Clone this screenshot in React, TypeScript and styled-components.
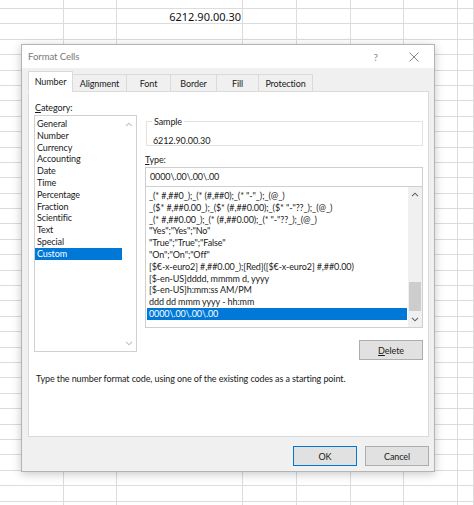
import styled, { createGlobalStyle } from "styled-components";

const GlobalStyle = createGlobalStyle`
  html, body {
    margin: 0;
    padding: 0;
    background: #ffffff;
  }
  body {
    font-family: Lato, "Noto Sans", sans-serif;
    color: #1a1a1a;
  }
`;

const colWidths = [64, 53, 126, 54, 54, 53, 54];
const ROWS = 34;

const categories = [
  "General",
  "Number",
  "Currency",
  "Accounting",
  "Date",
  "Time",
  "Percentage",
  "Fraction",
  "Scientific",
  "Text",
  "Special",
  "Custom",
];

const formats = [
  '_(* #,##0_);_(* (#,##0);_(* "-"_);_(@_)',
  '_($* #,##0.00_);_($* (#,##0.00);_($* "-"??_);_(@_)',
  '_(* #,##0.00_);_(* (#,##0.00);_(* "-"??_);_(@_)',
  '"Yes";"Yes";"No"',
  '"True";"True";"False"',
  '"On";"On";"Off"',
  "[$€-x-euro2] #,##0.00_);[Red]([$€-x-euro2] #,##0.00)",
  "[$-en-US]dddd, mmmm d, yyyy",
  "[$-en-US]h:mm:ss AM/PM",
  "ddd dd mmm yyyy - hh:mm",
  "0000\\.00\\.00\\.00",
];

const tabs = [
  { label: "Number", width: 45 },
  { label: "Alignment", width: 55 },
  { label: "Font", width: 45 },
  { label: "Border", width: 47 },
  { label: "Fill", width: 43 },
  { label: "Protection", width: 55 },
];

const Chevron = ({ up, color }: { up?: boolean; color: string }) => (
  <svg width="8" height="5" viewBox="0 0 8 5">
    <polyline
      points={up ? "1,4.2 4,1.2 7,4.2" : "1,0.8 4,3.8 7,0.8"}
      fill="none"
      stroke={color}
      strokeWidth="1.1"
    />
  </svg>
);

export default function App() {
  return (
    <Screen>
      <GlobalStyle />
      <Sheet>
        {Array.from({ length: ROWS }).map((_, r) =>
          [...colWidths, 0].map((_, c) => (
            <Cell key={`${r}-${c}`}>{r === 1 && c === 2 ? "6212.90.00.30" : ""}</Cell>
          ))
        )}
      </Sheet>

      <Dialog>
        <TitleBar>
          <Title>Format Cells</Title>
          <TitleButtons>
            <Help>?</Help>
            <svg width="10" height="10" viewBox="0 0 10 10">
              <line x1="0.5" y1="0.5" x2="9.5" y2="9.5" stroke="#7a7a7a" strokeWidth="0.9" />
              <line x1="9.5" y1="0.5" x2="0.5" y2="9.5" stroke="#7a7a7a" strokeWidth="0.9" />
            </svg>
          </TitleButtons>
        </TitleBar>

        <Body>
          <TabRow>
            {tabs.map((t, i) => (
              <Tab key={t.label} $width={t.width} $active={i === 0}>
                {t.label}
              </Tab>
            ))}
          </TabRow>

          <Panel>
            <Columns>
              <LeftCol>
                <FieldLabel>
                  <u>C</u>ategory:
                </FieldLabel>
                <CategoryList>
                  <CategoryItems>
                    {categories.map((c) => (
                      <Row key={c} $selected={c === "Custom"}>
                        {c}
                      </Row>
                    ))}
                  </CategoryItems>
                  <GhostScroll>
                    <Chevron up color="#c2c2c2" />
                    <Chevron color="#c2c2c2" />
                  </GhostScroll>
                </CategoryList>
              </LeftCol>

              <RightCol>
                <SampleBox>
                  <legend>Sample</legend>
                  <SampleValue>6212.90.00.30</SampleValue>
                </SampleBox>
                <TypeLabel>
                  <u>T</u>ype:
                </TypeLabel>
                <TypeInput>0000\.00\.00\.00</TypeInput>
                <FormatList>
                  <FormatItems>
                    {formats.map((f, i) => (
                      <Row key={f} $selected={i === formats.length - 1}>
                        {f}
                      </Row>
                    ))}
                  </FormatItems>
                  <ScrollBar>
                    <Chevron up color="#606060" />
                    <Track>
                      <Thumb />
                    </Track>
                    <Chevron color="#606060" />
                  </ScrollBar>
                </FormatList>
                <DeleteRow>
                  <Button>
                    <u>D</u>elete
                  </Button>
                </DeleteRow>
              </RightCol>
            </Columns>
            <HelpText>
              Type the number format code, using one of the existing codes as a starting point.
            </HelpText>
          </Panel>

          <Footer>
            <Button $primary>OK</Button>
            <Button>Cancel</Button>
          </Footer>
        </Body>
      </Dialog>
    </Screen>
  );
}

const Screen = styled.div`
  position: relative;
  width: 474px;
  height: 505px;
  overflow: hidden;
  background: #fff;
`;

const Sheet = styled.div`
  display: grid;
  grid-template-columns: ${colWidths.map((w) => `${w}px`).join(" ")} 1fr;
  grid-auto-rows: 15.4px;
  margin-top: -6.4px;
`;

const Cell = styled.div`
  box-sizing: border-box;
  border-right: 1px solid #dcdcdc;
  border-bottom: 1px solid #dcdcdc;
  font-family: "Noto Sans", sans-serif;
  font-size: 11px;
  line-height: 15px;
  text-align: right;
  padding-right: 1px;
  color: #111;
  white-space: nowrap;
`;

const Dialog = styled.div`
  position: absolute;
  left: 21px;
  top: 44px;
  width: 414px;
  height: 428px;
  box-sizing: border-box;
  border: 1px solid #b4b4b4;
  box-shadow: 0 2px 9px rgba(0, 0, 0, 0.22);
  display: flex;
  flex-direction: column;
  font-size: 9px;
  letter-spacing: -0.1px;
  background: #f0f0f0;
`;

const TitleBar = styled.div`
  height: 23px;
  background: #fff;
  display: flex;
  align-items: center;
  justify-content: space-between;
  padding: 0 15px 0 6px;
`;

const Title = styled.div`
  font-size: 9.6px;
  color: #7a7a7a;
`;

const TitleButtons = styled.div`
  display: flex;
  align-items: center;
  gap: 31px;
`;

const Help = styled.span`
  font-size: 10px;
  color: #8a8a8a;
`;

const Body = styled.div`
  flex: 1;
  display: flex;
  flex-direction: column;
  padding: 0 5px 0 6px;
`;

const TabRow = styled.div`
  display: flex;
  align-items: flex-end;
  height: 24px;
  margin-bottom: -1px;
  position: relative;
  z-index: 1;
`;

const Tab = styled.div<{ $width: number; $active?: boolean }>`
  box-sizing: border-box;
  width: ${(p) => p.$width}px;
  height: ${(p) => (p.$active ? 21 : 18)}px;
  display: flex;
  align-items: center;
  justify-content: center;
  background: ${(p) => (p.$active ? "#fff" : "#f0f0f0")};
  border: 1px solid #dadada;
  border-bottom: ${(p) => (p.$active ? "1px solid #fff" : "1px solid #dadada")};
  margin-left: -1px;
  color: #1a1a1a;
  &:first-child {
    margin-left: 0;
  }
`;

const Panel = styled.div`
  box-sizing: border-box;
  height: 346px;
  background: #fff;
  border: 1px solid #dadada;
  padding: 10px 5px 0 5px;
`;

const Columns = styled.div`
  display: grid;
  grid-template-columns: 103px 278px;
  column-gap: 8px;
`;

const LeftCol = styled.div`
  display: flex;
  flex-direction: column;
`;

const FieldLabel = styled.div`
  height: 11px;
  line-height: 11px;
  padding-left: 1px;
  margin-bottom: 2px;
`;

const CategoryList = styled.div`
  box-sizing: border-box;
  height: 237px;
  border: 1px solid #d0d0d0;
  display: flex;
`;

const CategoryItems = styled.div`
  flex: 1;
  padding-top: 2px;
`;

const Row = styled.div<{ $selected?: boolean }>`
  height: 11.8px;
  line-height: 11.8px;
  padding-left: 2px;
  white-space: nowrap;
  background: ${(p) => (p.$selected ? "#0078d7" : "transparent")};
  color: ${(p) => (p.$selected ? "#fff" : "#1a1a1a")};
`;

const GhostScroll = styled.div`
  width: 14px;
  display: flex;
  flex-direction: column;
  justify-content: space-between;
  align-items: center;
  padding: 6px 0 5px;
`;

const RightCol = styled.div`
  display: flex;
  flex-direction: column;
`;

const SampleBox = styled.fieldset`
  margin: 14px 0 0 1px;
  padding: 8px 5px 0;
  height: 30px;
  box-sizing: border-box;
  border: 1px solid #e2e2e2;
  legend {
    padding: 0 2px;
    font-size: 9px;
    line-height: 11px;
  }
`;

const SampleValue = styled.div`
  line-height: 11px;
  padding-left: 1px;
`;

const TypeLabel = styled.div`
  height: 11px;
  line-height: 11px;
  margin-top: 8px;
`;

const TypeInput = styled.div`
  box-sizing: border-box;
  margin-top: 2px;
  height: 20px;
  border: 1px solid #cfcfcf;
  line-height: 18px;
  padding-left: 4px;
`;

const FormatList = styled.div`
  box-sizing: border-box;
  height: 141px;
  border: 1px solid #cfcfcf;
  border-top: none;
  display: flex;
`;

const FormatItems = styled.div`
  flex: 1;
  padding: 3px 1px 0;
  overflow: hidden;
`;

const ScrollBar = styled.div`
  width: 14px;
  background: #f0f0f0;
  display: flex;
  flex-direction: column;
  align-items: center;
  padding: 5px 0 5px;
  gap: 4px;
`;

const Track = styled.div`
  flex: 1;
  width: 100%;
  display: flex;
  flex-direction: column;
  justify-content: flex-end;
`;

const Thumb = styled.div`
  height: 29px;
  margin: 0 1px 2px;
  background: #cdcdcd;
`;

const DeleteRow = styled.div`
  display: flex;
  justify-content: flex-end;
  margin-top: 12px;
`;

const Button = styled.div<{ $primary?: boolean }>`
  box-sizing: border-box;
  width: 64px;
  height: 20px;
  display: flex;
  align-items: center;
  justify-content: center;
  background: #e1e1e1;
  border: 1px solid ${(p) => (p.$primary ? "#0078d7" : "#adadad")};
  color: #1a1a1a;
`;

const HelpText = styled.div`
  margin-top: 13px;
  padding-left: 2px;
  line-height: 11px;
`;

const Footer = styled.div`
  display: flex;
  justify-content: flex-end;
  gap: 8px;
  padding-top: 9px;
`;
